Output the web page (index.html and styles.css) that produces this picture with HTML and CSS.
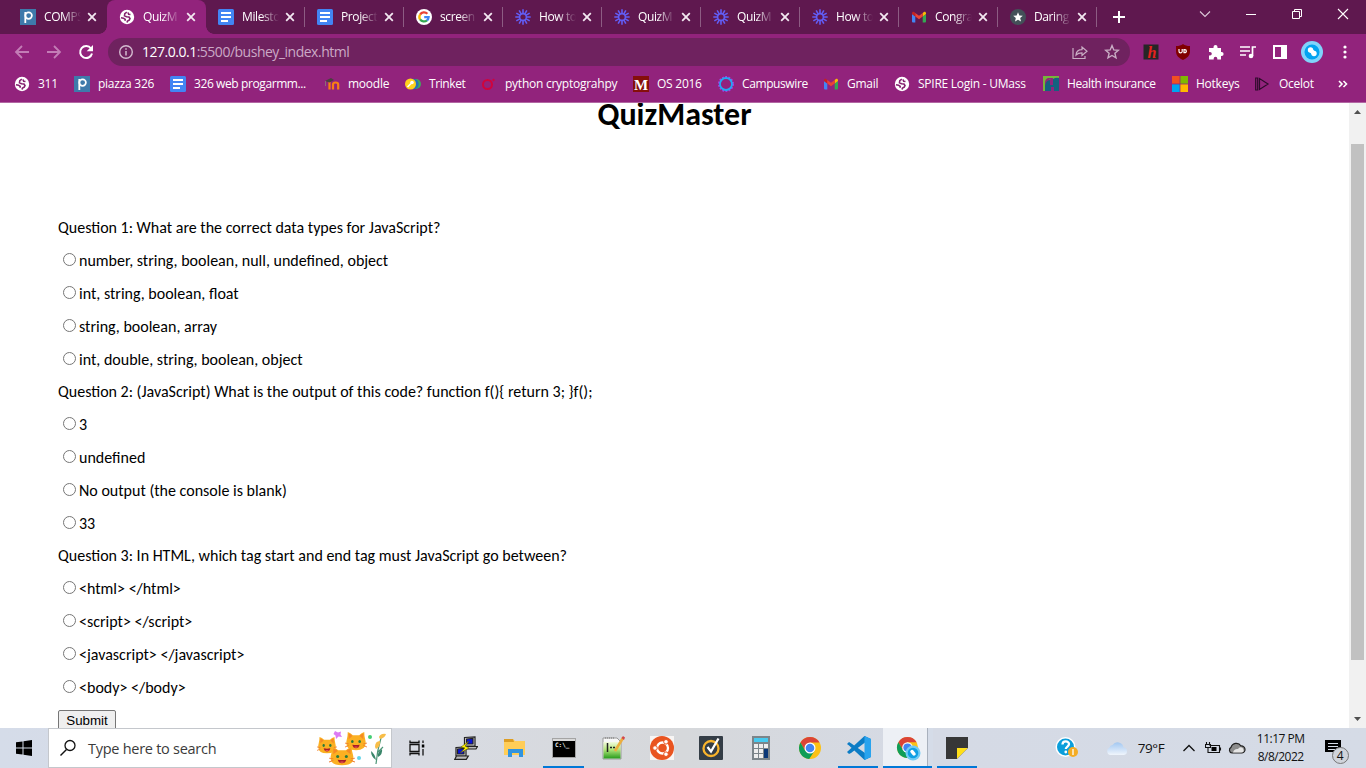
FILE: index.html
```html
<!DOCTYPE html>
<html lang="en">
<head>
<meta charset="utf-8">
<title>QuizMaster</title>
<link rel="stylesheet" href="styles.css">
</head>
<body>
<svg class="defs" width="0" height="0">
  <symbol id="x" viewBox="0 0 10 10"><path d="M1.2 1.2l7.6 7.6M8.8 1.2L1.2 8.800" stroke="#f3e8f1" stroke-width="1.8" fill="none"/></symbol>
  <symbol id="piazza" viewBox="0 0 16 16"><path fill="#3e7aab" d="M0 0h16v16H0z"/><circle cx="8.600" cy="6.600" r="3.300" fill="none" stroke="#fff" stroke-width="1.700"/><path d="M5.300 3v11" stroke="#fff" stroke-width="1.800"/></symbol>
  <symbol id="globe" viewBox="0 0 16 16"><circle cx="8" cy="8" r="7.200" fill="#fff"/><path d="M7.800 3.200L5.800 4.600 5.500 6.700l2 1 2.500.3 1 1.600-.8 1.600-1.700.8-.5 1.600M11.500 5.500L9.700 5.300 9 3.500M2 8.800l2.500.4 1.700 1.200-.3 1.300" fill="none" stroke="#84216f" stroke-width="1.600"/></symbol>
  <symbol id="doc" viewBox="0 0 16 16"><rect width="16" height="16" rx="1.500" fill="#4285f4"/><path d="M3 4h10M3 8h10M3 12h7" stroke="#fff" stroke-width="1.800"/></symbol>
  <symbol id="google" viewBox="0 0 16 16"><circle cx="8" cy="8" r="8" fill="#fff"/><g fill="none" stroke-width="2.300"><path d="M4.100 5.600A4.600 4.600 0 0 1 11.400 4.800" stroke="#ea4335"/><path d="M4.100 5.500a4.800 4.800 0 0 0 0 5" stroke="#fbbc05"/><path d="M4.100 10.400a4.600 4.600 0 0 0 6.900.9" stroke="#34a853"/><path d="M8.200 8.100h4.400a4.600 4.600 0 0 1-1.700 3.300" stroke="#4285f4"/></g></symbol>
  <symbol id="loom" viewBox="0 0 16 16"><g stroke="#625df5" stroke-width="1.600" fill="none"><path d="M8 .3v4M8 11.700v4M.3 8h4M11.700 8h4M4.150 1.300l2 3.500M9.850 11.200l2 3.500M1.300 4.150l3.500 2M11.200 9.850l3.500 2M1.300 11.850l3.500-2M11.200 6.150l3.500-2M4.150 14.700l2-3.500M9.850 4.800l2-3.500"/><circle cx="8" cy="8" r="3.400"/></g></symbol>
  <symbol id="gmail" viewBox="0 0 16 16"><path fill="#4285f4" d="M1 5l3.300 2.400V13.500H2a1 1 0 0 1-1-1z"/><path fill="#34a853" d="M11.700 7.400L15 5v7.500a1 1 0 0 1-1 1h-2.300z"/><path fill="#fbbc04" d="M11.700 4l1.200-1c1-.7 2.100 0 2.100 1.200V5l-3.300 2.500z"/><path fill="#c5221f" d="M1 5v-.8C1 3 2.200 2.300 3.100 3l1.200 1v3.500z"/><path fill="#ea4335" d="M4.300 4L8 6.800 11.700 4v3.500L8 10.300 4.300 7.500z"/></symbol>
  <symbol id="star" viewBox="0 0 16 16"><path d="M8 1.600l1.800 4.300 4.600.4-3.500 3 1.100 4.600L8 11.500l-4 2.400 1.100-4.600-3.500-3 4.600-.4z"/></symbol>
  <symbol id="chrome" viewBox="0 0 24 24"><circle cx="12" cy="12" r="11" fill="#fbc116"/><path fill="#db4437" d="M2.470 6.500A11 11 0 0 1 21.530 6.500H12l-4.800 8.200z"/><path fill="#0f9d58" d="M2.470 6.500A11 11 0 0 0 11.200 23l5.400-8.300L7.200 14.700z"/><circle cx="12" cy="12" r="5.500" fill="#fff"/><circle cx="12" cy="12" r="4.300" fill="#4285f4"/></symbol>
  <symbol id="cat" viewBox="0 0 24 24" preserveAspectRatio="none"><path d="M3 0q3 1 5.500 4h7Q18 1 21 0q0 5 1 9 3 14-10 14T2 9Q3 5 3 0z" fill="#fbb022"/><path d="M4 2q3 1 4 3L4 9zM20 2q-3 1-4 3l4 4z" fill="#f58a24"/><ellipse cx="8" cy="12" rx="1.400" ry="2" fill="#277a3c"/><ellipse cx="16" cy="12" rx="1.400" ry="2" fill="#277a3c"/><path d="M8 16q4 1 8 0-1 4.500-4 4.500T8 16" fill="#a61c28"/><path d="M9.500 19q2.500-1.500 5 0-2.500 2-5 0" fill="#f05a5a"/><path d="M0 14l4 1M0 19l4-2M24 14l-4 1M24 19l-4-2" stroke="#ee7b2c"/></symbol>
</svg>

<header class="browser">
  <div class="tabstrip">
    <div class="tabs">
      <div class="tab"><svg class="i16"><use href="#piazza"/></svg><span class="fade">COMPS</span><svg class="close"><use href="#x"/></svg></div>
      <div class="tab active"><svg class="i16"><use href="#globe"/></svg><span class="fade">QuizM</span><svg class="close"><use href="#x"/></svg></div>
      <div class="tab sep"><svg class="i16"><use href="#doc"/></svg><span class="fade">Milesto</span><svg class="close"><use href="#x"/></svg></div>
      <div class="tab sep"><svg class="i16"><use href="#doc"/></svg><span class="fade">Project</span><svg class="close"><use href="#x"/></svg></div>
      <div class="tab sep"><svg class="i16"><use href="#google"/></svg><span class="fade">screen</span><svg class="close"><use href="#x"/></svg></div>
      <div class="tab sep"><svg class="i16"><use href="#loom"/></svg><span class="fade">How to</span><svg class="close"><use href="#x"/></svg></div>
      <div class="tab sep"><svg class="i16"><use href="#loom"/></svg><span class="fade">QuizM</span><svg class="close"><use href="#x"/></svg></div>
      <div class="tab sep"><svg class="i16"><use href="#loom"/></svg><span class="fade">QuizM</span><svg class="close"><use href="#x"/></svg></div>
      <div class="tab sep"><svg class="i16"><use href="#loom"/></svg><span class="fade">How to</span><svg class="close"><use href="#x"/></svg></div>
      <div class="tab sep"><svg class="i16"><use href="#gmail"/></svg><span class="fade">Congra</span><svg class="close"><use href="#x"/></svg></div>
      <div class="tab sep"><svg class="i16" viewBox="0 0 16 16"><circle cx="8" cy="8" r="8" fill="#435058"/><use href="#star" x="2" y="2" width="12" height="12" fill="#fff"/></svg><span class="fade">Daring</span><svg class="close"><use href="#x"/></svg></div>
    </div>
    <svg class="newtab" width="12" height="12"><path d="M6 0v12M0 6h12" stroke="#fff" stroke-width="2"/></svg>
    <div class="winbuttons">
      <svg width="12" height="12"><path d="M1 3.500l5 5 5-5" fill="none" stroke="#ddc9d9" stroke-width="1.100"/></svg>
      <svg width="12" height="12"><path d="M1 6.500h10" stroke="#fff"/></svg>
      <svg width="12" height="12"><path d="M1.500 3.500h7v7h-7zM3.500 3.500v-2h7v7h-2" fill="none" stroke="#fff"/></svg>
      <svg width="12" height="12"><path d="M1 1l10 10M11 1L1 11" stroke="#fff" stroke-width="1.100"/></svg>
    </div>
  </div>

  <div class="toolbar">
    <div class="nav">
      <svg width="16" height="16"><path d="M15 8H2M8 2L2 8l6 6" fill="none" stroke="#c37db6" stroke-width="1.800"/></svg>
      <svg width="16" height="16"><path d="M1 8h13M8 2l6 6-6 6" fill="none" stroke="#c37db6" stroke-width="1.800"/></svg>
      <svg width="16" height="16"><path d="M13 4.500A6 6 0 1 0 14 9.500" fill="none" stroke="#fff" stroke-width="2"/><path d="M15 1v6.300H8.700z" fill="#fff"/></svg>
    </div>
    <div class="omnibox">
      <svg width="16" height="16"><circle cx="8" cy="8" r="6.300" fill="none" stroke="#d3bbcf" stroke-width="1.400"/><path d="M8 7v4.500M8 4.300v1.500" stroke="#d3bbcf" stroke-width="1.500"/></svg>
      <span class="url"><b>127.0.0.1</b>:5500/bushey_index.html</span>
      <svg width="16" height="16"><path d="M1 4v10.500h12V12M4 11c.3-4 2.500-5.300 6-5.300V3l5 4.300-5 4.200V8.800c-2.600 0-4.300.4-6 2.200z" fill="none" stroke="#c9adc4" stroke-width="1.200"/></svg>
      <svg width="16" height="16"><use href="#star" fill="none" stroke="#c9adc4" stroke-width="1.400"/></svg>
    </div>
    <div class="exts">
      <svg width="16" height="16"><rect width="15" height="15" x=".5" y=".5" fill="#262626"/><text x="4.500" y="13.500" class="h-mark">h</text></svg>
      <svg width="16" height="16"><path d="M8 0c2 1.500 4 2 7 2v5c0 5-3 7-7 9-4-2-7-4-7-9V2c3 0 5-.5 7-2z" fill="#800000"/><path d="M4 5v2.200a1.500 1.500 0 0 0 3.200 0V5M9 5.600v3.100h.8a1.550 1.550 0 0 0 0-3.100z" stroke="#fff" stroke-width="1.200" fill="none"/></svg>
      <svg width="16" height="16"><path d="M1 4h4.500V3a2 2 0 0 1 4 0v1H13v4h.6a2 2 0 0 1 0 4H13v3.500H9.300V14.500a1.800 1.800 0 0 0-3.600 0v1H1v-4h1a1.800 1.800 0 0 0 0-3.600H1z" fill="#fff"/></svg>
      <svg width="16" height="16"><path d="M0 3h10M0 7h10M0 11h6M12.500 12V3h3.500" stroke="#fff" stroke-width="1.700" fill="none"/><circle cx="11" cy="12" r="2.300" fill="#fff"/></svg>
      <svg width="16" height="16"><path d="M1 1h14v14H1zM3 3v10h6V3z" fill="#fff" fill-rule="evenodd"/></svg>
      <svg width="22" height="22"><circle cx="11" cy="11" r="11" fill="#80d4fb"/><circle cx="11" cy="11" r="7.500" fill="#02a3f1"/><circle cx="9.500" cy="9" r="2.700" fill="#fff"/><circle cx="13" cy="12.500" r="2.700" fill="#fff"/><path d="M9.500 9l3.500 3.500" stroke="#fff" stroke-width="4"/></svg>
      <svg width="16" height="16"><circle cx="8" cy="3" r="1.600" fill="#fff"/><circle cx="8" cy="8" r="1.600" fill="#fff"/><circle cx="8" cy="13" r="1.600" fill="#fff"/></svg>
    </div>
  </div>

  <div class="bookmarks">
    <div class="bm"><svg class="i16"><use href="#globe"/></svg><span>311</span></div>
    <div class="bm"><svg class="i16"><use href="#piazza"/></svg><span>piazza 326</span></div>
    <div class="bm"><svg class="i16"><use href="#doc"/></svg><span class="tight">326 web progarmm...</span></div>
    <div class="bm"><svg class="i16"><path d="M5.500 6v7.500" stroke="#f98012" stroke-width="2.200"/><path d="M9 13.500V8.500q0-2 2.600-2t2.600 2V13.500" stroke="#f98012" stroke-width="2.200" fill="none"/><path d="M1 5l6-3 3 2-4.500 2.500z" fill="#49413e"/><path d="M1.500 5v5" stroke="#8c6b75"/></svg><span>moodle</span></div>
    <div class="bm"><svg class="i16"><circle cx="11" cy="8" r="5" fill="#41a85f"/><circle cx="8.500" cy="8" r="5.200" fill="#2571b8"/><circle cx="5.500" cy="8" r="5.500" fill="#ffd21c"/><path d="M2.500 11l3.500-3.500" stroke="#fff" stroke-width="1.600"/><circle cx="7" cy="6.500" r="1.800" fill="#fff"/></svg><span class="tight">Trinket</span></div>
    <div class="bm"><svg class="i16"><circle cx="6.500" cy="8.500" r="4.500" fill="none" stroke="#d0043c" stroke-width="2"/><circle cx="12.500" cy="4" r="1.200" fill="#d0043c"/></svg><span>python cryptograhpy</span></div>
    <div class="bm"><svg class="i16"><path d="M0 0h16v16H0z" fill="#850f0b"/><text x="1" y="13.500" class="m-mark">M</text></svg><span>OS 2016</span></div>
    <div class="bm"><svg class="i16"><circle cx="8" cy="8" r="7" fill="none" stroke="#a341e8" stroke-width="2" stroke-dasharray="1.800 1.400"/><circle cx="8" cy="8" r="6" fill="none" stroke="#22a9f4" stroke-width="1.800"/></svg><span class="tight">Campuswire</span></div>
    <div class="bm"><svg class="i16"><use href="#gmail"/></svg><span>Gmail</span></div>
    <div class="bm"><svg class="i16"><use href="#globe"/></svg><span>SPIRE Login - UMass</span></div>
    <div class="bm"><svg class="i16"><path d="M0 0h16v5h-3V3H8Q3 4 2 9v6H0z" fill="#78b53a"/><path d="M5 2h5v1H7Q3 5 2 10V7q0-4 3-5z" fill="#92237c"/><path d="M2 15V10q1-6 5-6v5h3V3q3-2 6-1v13h-5v-4H8v4z" fill="#15617f"/></svg><span class="tight">Health insurance</span></div>
    <div class="bm"><svg class="i16"><path d="M0 0h7.600v7.600H0z" fill="#f25022"/><path d="M8.400 0H16v7.600H8.400z" fill="#7fba00"/><path d="M0 8.400h7.600V16H0z" fill="#00a4ef"/><path d="M8.400 8.400H16V16H8.400z" fill="#ffb900"/></svg><span>Hotkeys</span></div>
    <div class="bm"><svg class="i16"><path d="M.7 2h2v12h-2zM4.500 2.500v11L13 8z" stroke="#2e0b2b" stroke-width="1.200" fill="none"/></svg><span>Ocelot</span></div>
    <div class="bm"><svg width="10" height="16"><path d="M1 5l3 3-3 3M5.500 5l3 3-3 3" fill="none" stroke="#fff" stroke-width="1.600"/></svg></div>
  </div>
</header>

<main class="viewport">
  <div class="page">
    <h1>QuizMaster</h1>
    <form class="quiz">
      <p>Question 1: What are the correct data types for JavaScript?</p>
      <label><input type="radio" name="q1"><span>number, string, boolean, null, undefined, object</span></label>
      <label><input type="radio" name="q1"><span>int, string, boolean, float</span></label>
      <label><input type="radio" name="q1"><span>string, boolean, array</span></label>
      <label><input type="radio" name="q1"><span>int, double, string, boolean, object</span></label>
      <p>Question 2: (JavaScript) What is the output of this code? function f(){ return 3; }f();</p>
      <label><input type="radio" name="q2"><span>3</span></label>
      <label><input type="radio" name="q2"><span>undefined</span></label>
      <label><input type="radio" name="q2"><span>No output (the console is blank)</span></label>
      <label><input type="radio" name="q2"><span>33</span></label>
      <p>Question 3: In HTML, which tag start and end tag must JavaScript go between?</p>
      <label><input type="radio" name="q3"><span>&lt;html&gt; &lt;/html&gt;</span></label>
      <label><input type="radio" name="q3"><span>&lt;script&gt; &lt;/script&gt;</span></label>
      <label><input type="radio" name="q3"><span>&lt;javascript&gt; &lt;/javascript&gt;</span></label>
      <label><input type="radio" name="q3"><span>&lt;body&gt; &lt;/body&gt;</span></label>
      <button type="button">Submit</button>
    </form>
  </div>
  <div class="scrollbar">
    <svg width="17" height="17"><path d="M5 11l3.500-4 3.500 4z" fill="#505050"/></svg>
    <div class="track"><div class="thumb"></div></div>
    <svg width="17" height="17"><path d="M5 6l3.500 4L12 6z" fill="#505050"/></svg>
  </div>
</main>

<footer class="taskbar">
  <div class="start"><svg width="16" height="16"><path d="M0 2.300L6.500 1.400V7.500H0zM7.500 1.200L16 0v7.500H7.500zM0 8.500h6.500v6.100L0 13.700zM7.500 8.500H16V16l-8.500-1.200z"/></svg></div>
  <div class="search">
    <svg width="18" height="18"><circle cx="11" cy="6.500" r="5" fill="none" stroke="#111" stroke-width="1.300"/><path d="M7.500 10.500L1.500 16.500" stroke="#111" stroke-width="1.400"/></svg>
    <span>Type here to search</span>
    <svg class="cats" width="70" height="36"><use href="#cat" x="0" y="7" width="20" height="17"/><use href="#cat" x="28" y="2" width="22" height="19"/><use href="#cat" x="12" y="17" width="26" height="19"/><path d="M18 1l3 1.500 3-1-.5 3 1.500 2.500-3.500-.5L19 9l-.5-3.500-2-1.500z" fill="#dc7bf3"/><circle cx="53" cy="7" r="2" fill="#44ce73"/><circle cx="42" cy="28" r="2" fill="#62d5e8"/><path d="M59 34q1-13 5-26M61 22l5-5" stroke="#4d9778" stroke-width="1.200" fill="none"/><path d="M59 30q-5-3-5-9 4 3 5 9zM61 27q-1-5 4-8 1 5-4 8z" fill="#39866a"/><path d="M62 7q2-4 7-3-1 4-6 5zM58 17q0-6 5-6 1 5-4 8z" fill="#f8bd48"/></svg>
  </div>
  <div class="apps">
    <div><svg width="18" height="18"><path d="M2 1.500v2h9v-2M2 16.500v-2h9v2M2 5.500h9v7H2zM15 1.500v2.500M15 10v6.500" fill="none" stroke="#111" stroke-width="1.300"/><path d="M13.800 5.500h2.500v3h-2.500z"/></svg></div>
    <div><svg width="24" height="24"><g stroke="#222" stroke-width="1.200"><path d="M10.500 1.500L21 .8V10H10.500z" fill="#ddd"/><path d="M12.500 3l6.500-.5V8h-6.500z" fill="#0813d8"/><path d="M10 13h12l1.500-2.500h-13z" fill="#bbb"/><path d="M2 11.500l10-.7V20H2z" fill="#ddd"/><path d="M3.500 13l6.500-.5V18H3.500z" fill="#0813d8"/><path d="M.8 23.300h11.500l2-3.300H2.500z" fill="#bbb"/></g><path d="M15 5l-8 6 4 1-5 5 9-5-4-2z" fill="#fff200" stroke="#554f00" stroke-width=".5"/></svg></div>
    <div><svg width="24" height="24"><path d="M1 3h9l2 2h10v14H1z" fill="#ffcd57"/><path d="M1 3h9l1 3H1z" fill="#dd9d23"/><path d="M5 21v-8h15v8h-4v-4H9v4z" fill="#3194df"/></svg></div>
    <div class="run"><svg width="24" height="24"><path d="M.5 2.500h23v19H.5z" fill="#000" stroke="#a4a4a4"/><path d="M1 3h22v2H1z" fill="#d9d9d9"/><text x="3" y="11" class="cmd">C:\_</text></svg></div>
    <div><svg width="24" height="24"><defs><linearGradient id="green" x2="0" y2="1"><stop stop-color="#f4fbe0"/><stop offset=".45" stop-color="#b5e67c"/><stop offset="1" stop-color="#279c1c"/></linearGradient></defs><path d="M2 2h14l4 4v17H2z" fill="#f8f8f8" stroke="#999"/><path d="M2.500 6h17v16.500h-17z" fill="url(#green)"/><path d="M6.500 7v9M9 11.500h2M12 11.500h2" stroke="#222" stroke-width="1.500"/><path d="M4 2h10" stroke="#777" stroke-dasharray="1 1"/><path d="M14 15L22 2" stroke="#ecae3f" stroke-width="2.600"/><path d="M20.500 2l1.500-2 2 1.600L23 4z" fill="#d44848"/></svg></div>
    <div><svg width="24" height="24"><path d="M0 0h24v24H0z" fill="#f7f5f4"/><circle cx="12" cy="12" r="12" fill="#e95420"/><circle cx="12.500" cy="12" r="5.500" fill="none" stroke="#fff" stroke-width="2.300"/><g fill="#fff" stroke="#e95420"><circle cx="5" cy="12" r="2.300"/><circle cx="16" cy="5.800" r="2.300"/><circle cx="16" cy="18.200" r="2.300"/></g></svg></div>
    <div><svg width="24" height="24"><rect width="24" height="24" rx="1" fill="#343d46"/><circle cx="12" cy="12.500" r="7.500" fill="none" stroke="#f9b42c" stroke-width="2.300"/><path d="M8.500 11l3.500 4.500L19.500 2.500" fill="none" stroke="#fff" stroke-width="2.300"/></svg></div>
    <div><svg width="24" height="24"><path d="M3 0h18v24H3z" fill="#7c858a"/><path d="M5 2h14v4H5z" fill="#48caef"/><path d="M5 8h4v4H5zM10 8h4v4h-4zM15 8h4v4h-4zM5 13h4v4H5zM10 13h4v4h-4zM5 18h4v4H5zM10 18h4v4h-4z" fill="#eee"/><path d="M15 13h4v9h-4z" fill="#0a3777"/></svg></div>
    <div><svg width="24" height="24"><use href="#chrome"/></svg></div>
    <div class="run"><svg width="24" height="24"><path d="M17.500 0L24 3v18l-6.500 3L2 9.500 0 8l2-2 2 1.200L18 17V6.500L4 17l-2 1-2-2z" fill="#0c7cc5"/><path d="M17.500 0L24 3v18l-6.500 3z" fill="#29a3ee"/></svg></div>
    <div class="run current"><svg width="28" height="26"><use href="#chrome" x="2" y="1" width="23" height="23"/><circle cx="19" cy="18" r="7.500" fill="#70cbf4"/><circle cx="19" cy="18" r="5.300" fill="#10a0e4"/><path d="M18 16.500l2 2.500" stroke="#fff" stroke-width="3.500" stroke-linecap="round"/></svg></div>
    <div class="run"><svg width="24" height="24"><path d="M1 1h22v22H1z" fill="#373737"/><path d="M12 12h11L12 23z" fill="#ffdf18"/><path d="M23 12v11H12z" fill="#d6dae4"/></svg></div>
  </div>
  <div class="tray">
    <svg width="24" height="24"><circle cx="10.500" cy="11" r="10" fill="#fff"/><circle cx="10.500" cy="11" r="8.500" fill="#0b9edb"/><path d="M7.500 8.500c0-4 6.500-4 6.500-.4 0 2.500-3.200 2.400-3.200 5" fill="none" stroke="#fff" stroke-width="2.300"/><circle cx="10.800" cy="16" r="1.400" fill="#fff"/><circle cx="18" cy="16" r="5" fill="#f4ac24"/><path d="M18 13v6" stroke="#fff" stroke-width="1.300"/></svg>
    <svg class="weather" width="22" height="16"><defs><linearGradient id="cl" x2="0" y2="1"><stop stop-color="#a2c7f1"/><stop offset="1" stop-color="#f0f5fc"/></linearGradient></defs><path d="M4 15a4 4 0 0 1-.5-7.500 3 3 0 0 1 3-2.500 6 6 0 0 1 11 2.500A3.800 3.800 0 0 1 18 15z" fill="url(#cl)"/></svg>
    <span class="temp">79°F</span>
    <svg class="caret" width="14" height="10"><path d="M1.500 8L7 2.500 12.500 8" fill="none" stroke="#111" stroke-width="1.300"/></svg>
    <svg class="battery" width="17" height="14"><path d="M4.500 4.500h10v7h-10M15.500 6.500v3M1.500 1v2M4.500 1v2M.5 3.500h5v3h-5zM3 7v4.500h2" stroke="#111" stroke-width="1.100" fill="none"/><path d="M6.500 6h5v4h-5z"/></svg>
    <svg class="cloud" width="18" height="14"><path d="M4 12a3 3 0 0 1-1-5.600A5.500 5.500 0 0 1 13 5a3.500 3.500 0 0 1 1 7z" fill="#8c8c8c" stroke="#222" stroke-width="1.200"/><path d="M5 11.500q1-4 5-3.500 2-3 5-.5 2 4-2 4z" fill="#e6e6e6"/></svg>
    <div class="clock"><span>11:17 PM</span><span>8/8/2022</span></div>
    <div class="notify"><svg width="16" height="16"><path d="M0 0h16v12h-4v4l-4-4H0z"/><path d="M3 3.500h10M3 6.500h10M3 9.500h7" stroke="#d5dbe6"/></svg><span class="badge">4</span></div>
  </div>
</footer>
</body>
</html>
```
FILE: styles.css
```css
* { box-sizing: border-box; }
body { margin: 0; width: 1366px; height: 768px; overflow: hidden; display: flex; flex-direction: column; background: #fff; font-family: "Open Sans", sans-serif; }
svg { display: block; flex: none; }
.defs { position: absolute; }
.i16 { width: 16px; height: 16px; }
.browser { height: 103px; flex: none; background: #92237c; border-bottom: 1px solid #b267a3; color: #fff; font-size: 12px; }

.tabstrip { height: 34px; background: #5f184f; display: flex; align-items: center; }
.tabs { display: flex; height: 34px; padding-left: 8px; }
.tab { width: 99px; height: 34px; padding-left: 12px; display: flex; align-items: center; position: relative; }
.tab .fade { margin: 0 -6px 1px 8px; width: 42px; white-space: nowrap; letter-spacing: -.4px; mask-image: linear-gradient(90deg, #000 45%, transparent 88%); }
.close { width: 10px; height: 10px; margin-left: 7px; }
.tab.active { background: #92237c; border-radius: 8px 8px 0 0; }
.tab.active::before, .tab.active::after { content: ""; position: absolute; bottom: 0; width: 8px; height: 8px; }
.tab.active::before { left: -8px; background: radial-gradient(circle at 0 0, transparent 7.5px, #92237c 8px); }
.tab.active::after { right: -8px; background: radial-gradient(circle at 100% 0, transparent 7.5px, #92237c 8px); }
.tab.sep::after { content: ""; position: absolute; right: 0; top: 7px; width: 1px; height: 20px; background: #8d5c83; }
.newtab { margin-left: 16px; }
.winbuttons { margin-left: auto; display: flex; gap: 34px; padding: 0 17px 6px 0; }

.toolbar { height: 36px; display: flex; align-items: center; }
.nav { display: flex; gap: 16px; padding-left: 14px; width: 108px; }
.omnibox { width: 1022px; height: 28px; border-radius: 14px; background: #6f225f; display: flex; align-items: center; padding: 0 10px; }
.url { margin: 0 auto 0 8px; padding-bottom: 1px; font-size: 14px; letter-spacing: -.49px; color: #cba9c6; white-space: nowrap; }
.url b { font-weight: 400; color: #fff; }
.omnibox .url + svg { margin-right: 16px; }
.exts { display: flex; align-items: center; gap: 16.3px; padding-left: 13px; }
.exts svg:nth-child(6) { margin: 0 -3px; }
.h-mark { font: italic bold 16px "Liberation Serif", serif; fill: #e6211d; }
.m-mark { font: bold 15px "Liberation Serif", serif; fill: #fff; }

.bookmarks { height: 28px; padding-left: 14px; display: grid; align-items: center; grid-template-columns: 60px 96px 154px 81px 76px 152px 85px 105px 71px 149px 129px 83px 83px 20px; letter-spacing: -.25px; }
.bm { display: flex; align-items: center; gap: 8px; white-space: nowrap; }
.bm span { padding-bottom: 1px; }
.bm .tight { letter-spacing: -.4px; }

.viewport { height: 625px; flex: none; display: flex; overflow: hidden; }
.page { width: 1349px; padding-left: 58px; font-family: Carlito, Lato, sans-serif; font-size: 16px; color: #000; }
h1 { margin: 0 58px 0 0; height: 109px; text-align: center; font-size: 32px; line-height: 24px; font-weight: 700; }
.quiz p { margin: 0; height: 32px; line-height: 32px; }
.quiz label { height: 33px; line-height: 33px; display: flex; align-items: center; }
.quiz input { width: 13px; height: 13px; margin: 0 3px 2px 5px; }
.quiz button { display: block; margin-top: 6px; width: 58px; height: 21px; padding: 0; border: 1px solid #767676; border-radius: 2px; background: #efefef; color: #000; font: 13.333px "Liberation Sans", sans-serif; }
.scrollbar { width: 17px; background: #f1f1f1; display: flex; flex-direction: column; }
.track { flex: 1; padding: 24px 2px 0; }
.thumb { height: 516px; background: #c1c1c1; }

.taskbar { height: 40px; flex: none; display: flex; background: linear-gradient(90deg, #d5dce9, #d8dbe2 32%, #d6d8db 50%, #d5dae5 68%, #d5dbe6); }
.start { width: 48px; display: flex; align-items: center; padding-left: 16px; }
.search { width: 344px; background: #fff; border: 1px solid #c4c7cc; display: flex; align-items: center; padding-left: 10px; font-size: 14.5px; letter-spacing: -.27px; color: #3b3b3b; }
.search span { margin-left: 11px; }
.cats { margin: 0 4px 0 auto; }
.apps { display: flex; }
.apps div { width: 49.15px; display: flex; align-items: center; justify-content: center; position: relative; }
.apps .run::after { content: ""; position: absolute; bottom: 0; left: 4px; right: 5px; height: 2px; background: #0078d7; }
.apps .current { background: linear-gradient(90deg, #edf0f5 44px, #a9b1bd 44px 45px, #d5dce8 45px); }
.apps .current::after { left: 0; right: 1px; }
.cmd { font: 700 6px "DejaVu Sans Mono", monospace; fill: #eee; }
.tray { flex: 1; display: flex; align-items: center; padding-left: 73px; font-size: 12px; color: #111; }
.weather { margin-left: 27px; }
.temp { margin-left: 10px; width: 36px; font-size: 13.5px; letter-spacing: -.4px; white-space: nowrap; }
.caret { margin-left: 8px; }
.battery { margin-left: 9px; }
.cloud { margin-left: 6px; }
.clock { margin-left: 9px; width: 52px; display: flex; flex-direction: column; align-items: center; line-height: 18px; letter-spacing: -.5px; white-space: nowrap; }
.notify { margin-left: 18px; position: relative; }
.badge { position: absolute; left: 7px; top: 7px; width: 17px; height: 17px; border: 1px solid #777; border-radius: 50%; background: #d0d4db; text-align: center; line-height: 15px; font-size: 12px; }
```
